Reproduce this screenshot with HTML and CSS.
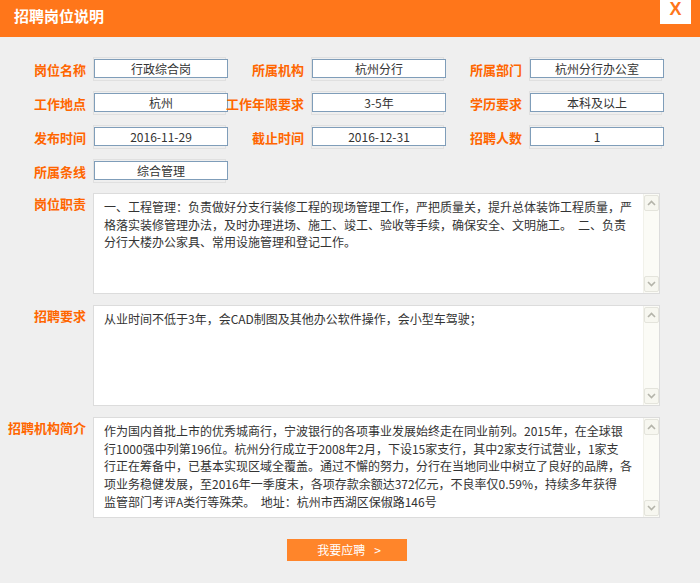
FILE: index.html
```html
<!DOCTYPE html>
<html lang="zh-CN">
<head>
<meta charset="utf-8">
<title>招聘岗位说明</title>
<link rel="stylesheet" href="styles.css">
</head>
<body>
<div class="dialog">
  <div class="header">
    <h1 class="title">招聘岗位说明</h1>
    <span class="close">X</span>
  </div>
  <div class="form">
    <div class="row">
      <div class="field"><span class="label">岗位名称</span><span class="box"><span class="input">行政综合岗</span></span></div>
      <div class="field"><span class="label">所属机构</span><span class="box"><span class="input">杭州分行</span></span></div>
      <div class="field"><span class="label">所属部门</span><span class="box"><span class="input">杭州分行办公室</span></span></div>
    </div>
    <div class="row">
      <div class="field"><span class="label">工作地点</span><span class="box"><span class="input">杭州</span></span></div>
      <div class="field"><span class="label">工作年限要求</span><span class="box"><span class="input">3-5年</span></span></div>
      <div class="field"><span class="label">学历要求</span><span class="box"><span class="input">本科及以上</span></span></div>
    </div>
    <div class="row">
      <div class="field"><span class="label">发布时间</span><span class="box"><span class="input">2016-11-29</span></span></div>
      <div class="field"><span class="label">截止时间</span><span class="box"><span class="input">2016-12-31</span></span></div>
      <div class="field"><span class="label">招聘人数</span><span class="box"><span class="input">1</span></span></div>
    </div>
    <div class="row">
      <div class="field"><span class="label">所属条线</span><span class="box"><span class="input">综合管理</span></span></div>
    </div>

    <div class="area-row">
      <span class="label area-label">岗位职责</span>
      <div class="area">
        <div class="area-text">一、工程管理：负责做好分支行装修工程的现场管理工作，严把质量关，提升总体装饰工程质量，严格落实装修管理办法，及时办理进场、施工、竣工、验收等手续，确保安全、文明施工。　二、负责分行大楼办公家具、常用设施管理和登记工作。</div>
        <div class="scrollbar"><span class="sb-btn"><svg viewBox="0 0 9 6" width="9" height="6"><path d="M1 5 L4.5 1.5 L8 5" fill="none" stroke="#b4b4aa" stroke-width="1.6"/></svg></span><span class="sb-track"></span><span class="sb-btn"><svg viewBox="0 0 9 6" width="9" height="6"><path d="M1 1 L4.5 4.5 L8 1" fill="none" stroke="#b4b4aa" stroke-width="1.6"/></svg></span></div>
      </div>
    </div>

    <div class="area-row">
      <span class="label area-label">招聘要求</span>
      <div class="area">
        <div class="area-text">从业时间不低于3年，会CAD制图及其他办公软件操作，会小型车驾驶；</div>
        <div class="scrollbar"><span class="sb-btn"><svg viewBox="0 0 9 6" width="9" height="6"><path d="M1 5 L4.5 1.5 L8 5" fill="none" stroke="#b4b4aa" stroke-width="1.6"/></svg></span><span class="sb-track"></span><span class="sb-btn"><svg viewBox="0 0 9 6" width="9" height="6"><path d="M1 1 L4.5 4.5 L8 1" fill="none" stroke="#b4b4aa" stroke-width="1.6"/></svg></span></div>
      </div>
    </div>

    <div class="area-row">
      <span class="label area-label">招聘机构简介</span>
      <div class="area">
        <div class="area-text">作为国内首批上市的优秀城商行，宁波银行的各项事业发展始终走在同业前列。2015年，在全球银<br>行1000强中列第196位。杭州分行成立于2008年2月，下设15家支行，其中2家支行试营业，1家支<br>行正在筹备中，已基本实现区域全覆盖。通过不懈的努力，分行在当地同业中树立了良好的品牌，各<br>项业务稳健发展，至2016年一季度末，各项存款余额达372亿元，不良率仅0.59%，持续多年获得<br>监管部门考评A类行等殊荣。&nbsp; 地址：杭州市西湖区保俶路146号</div>
        <div class="scrollbar"><span class="sb-btn"><svg viewBox="0 0 9 6" width="9" height="6"><path d="M1 5 L4.5 1.5 L8 5" fill="none" stroke="#b4b4aa" stroke-width="1.6"/></svg></span><span class="sb-track"></span><span class="sb-btn"><svg viewBox="0 0 9 6" width="9" height="6"><path d="M1 1 L4.5 4.5 L8 1" fill="none" stroke="#b4b4aa" stroke-width="1.6"/></svg></span></div>
      </div>
    </div>

    <div class="actions">
      <button class="apply" type="button">我要应聘<span class="arrow">&gt;</span></button>
    </div>
  </div>
</div>
</body>
</html>
```
FILE: styles.css
```css
* { box-sizing: border-box; }

html, body {
  margin: 0;
  padding: 0;
  background: #efefef;
}

body {
  width: 700px;
  height: 583px;
  overflow: hidden;
  font-family: "Noto Sans CJK SC", "Liberation Sans", sans-serif;
  font-size: 12px;
  color: #333;
}

.header {
  height: 37px;
  background: #ff761a;
  display: flex;
  align-items: flex-start;
  justify-content: space-between;
  padding-left: 14px;
  padding-right: 9px;
}

.title {
  margin: 0;
  margin-top: 6px;
  font-size: 15px;
  line-height: 20px;
  font-weight: bold;
  color: #fff;
}

.close {
  width: 31px;
  height: 24px;
  background: #fff;
  color: #ff761a;
  font-family: "Liberation Sans", sans-serif;
  font-weight: bold;
  font-size: 18px;
  line-height: 18px;
  text-align: center;
}

.form {
  padding: 20px 0 0 10px;
}

.row {
  display: flex;
  height: 24px;
  margin-bottom: 10px;
}

.field {
  display: flex;
  align-items: center;
}

.label {
  width: 76px;
  margin-right: 7px;
  display: flex;
  justify-content: flex-end;
  white-space: nowrap;
  color: #ff6600;
  font-weight: bold;
  font-size: 13px;
  line-height: 17px;
}

.box {
  display: block;
  width: 133px;
  height: 24px;
  border: 1px solid #e0e0e0;
  margin-right: 2px;
}

.input {
  display: block;
  width: 134px;
  height: 19px;
  margin-top: 1px;
  border: 1px solid #7f9db9;
  background: #fff;
  text-align: center;
  font-size: 12px;
  line-height: 17px;
  color: #333;
  white-space: nowrap;
}

.area-row {
  display: flex;
  align-items: flex-start;
  margin-bottom: 11px;
}

.area-label {
  padding-top: 2px;
}

.area {
  width: 567px;
  height: 101px;
  border: 1px solid #dcdcdc;
  background: #fff;
  display: flex;
}

.area-text {
  flex: 1;
  padding: 4px 10px 0 10px;
  font-size: 12px;
  line-height: 17.7px;
  color: #333;
  overflow: hidden;
}

.scrollbar {
  width: 16px;
  display: flex;
  flex-direction: column;
  background: #fbfbf6;
  border-left: 1px solid #f1f1ea;
}

.sb-btn {
  height: 16px;
  margin: 1px 0;
  border: 1px solid #e4e4dc;
  border-radius: 2px;
  background: #f7f7f0;
  display: flex;
  align-items: center;
  justify-content: center;
}

.sb-track {
  flex: 1;
}

.actions {
  display: flex;
  justify-content: center;
  padding-right: 16px;
  margin-top: 21px;
}

.apply {
  width: 120px;
  height: 22px;
  border: 0;
  background: #ff852a;
  color: #fff;
  font-family: "Noto Sans CJK SC", "Liberation Sans", sans-serif;
  font-size: 12px;
  line-height: 22px;
  padding: 0 0 0 4px;
  cursor: pointer;
}

.arrow {
  margin-left: 9px;
}
```
